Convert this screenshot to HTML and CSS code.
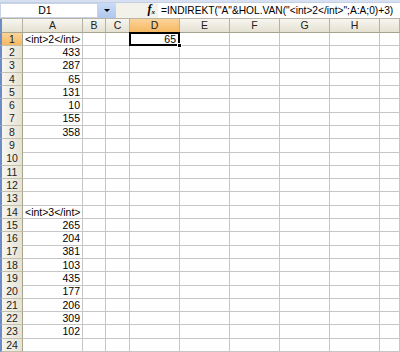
FILE: index.html
```html
<!DOCTYPE html>
<html>
<head>
<meta charset="utf-8">
<link rel="stylesheet" href="styles.css">
</head>
<body>
<div class="app">
  <div class="topstrip"></div>
  <div class="fbar">
    <div class="namebox">D1</div>
    <div class="dd"><span class="tri"></span></div>
    <div class="fxarea"><span class="fx">f<sub>x</sub></span></div>
    <div class="formula">=INDIREKT("A"&amp;HOL.VAN("&lt;int&gt;2&lt;/int&gt;";A:A;0)+3)</div>
  </div>
  <div class="sheet">
    <div class="row hdr"><span class="corner"></span><span>A</span><span>B</span><span>C</span><span class="sel">D</span><span>E</span><span>F</span><span>G</span><span>H</span><span></span></div>
    <div class="row"><span class="rh sel">1</span><span class="l">&lt;int&gt;2&lt;/int&gt;</span><span></span><span></span><span class="active">65<b class="handle"></b></span><span></span><span></span><span></span><span></span><span></span></div>
    <div class="row"><span class="rh">2</span><span>433</span><span></span><span></span><span></span><span></span><span></span><span></span><span></span><span></span></div>
    <div class="row"><span class="rh">3</span><span>287</span><span></span><span></span><span></span><span></span><span></span><span></span><span></span><span></span></div>
    <div class="row"><span class="rh">4</span><span>65</span><span></span><span></span><span></span><span></span><span></span><span></span><span></span><span></span></div>
    <div class="row"><span class="rh">5</span><span>131</span><span></span><span></span><span></span><span></span><span></span><span></span><span></span><span></span></div>
    <div class="row"><span class="rh">6</span><span>10</span><span></span><span></span><span></span><span></span><span></span><span></span><span></span><span></span></div>
    <div class="row"><span class="rh">7</span><span>155</span><span></span><span></span><span></span><span></span><span></span><span></span><span></span><span></span></div>
    <div class="row"><span class="rh">8</span><span>358</span><span></span><span></span><span></span><span></span><span></span><span></span><span></span><span></span></div>
    <div class="row"><span class="rh">9</span><span></span><span></span><span></span><span></span><span></span><span></span><span></span><span></span><span></span></div>
    <div class="row"><span class="rh">10</span><span></span><span></span><span></span><span></span><span></span><span></span><span></span><span></span><span></span></div>
    <div class="row"><span class="rh">11</span><span></span><span></span><span></span><span></span><span></span><span></span><span></span><span></span><span></span></div>
    <div class="row"><span class="rh">12</span><span></span><span></span><span></span><span></span><span></span><span></span><span></span><span></span><span></span></div>
    <div class="row"><span class="rh">13</span><span></span><span></span><span></span><span></span><span></span><span></span><span></span><span></span><span></span></div>
    <div class="row"><span class="rh">14</span><span class="l">&lt;int&gt;3&lt;/int&gt;</span><span></span><span></span><span></span><span></span><span></span><span></span><span></span><span></span></div>
    <div class="row"><span class="rh">15</span><span>265</span><span></span><span></span><span></span><span></span><span></span><span></span><span></span><span></span></div>
    <div class="row"><span class="rh">16</span><span>204</span><span></span><span></span><span></span><span></span><span></span><span></span><span></span><span></span></div>
    <div class="row"><span class="rh">17</span><span>381</span><span></span><span></span><span></span><span></span><span></span><span></span><span></span><span></span></div>
    <div class="row"><span class="rh">18</span><span>103</span><span></span><span></span><span></span><span></span><span></span><span></span><span></span><span></span></div>
    <div class="row"><span class="rh">19</span><span>435</span><span></span><span></span><span></span><span></span><span></span><span></span><span></span><span></span></div>
    <div class="row"><span class="rh">20</span><span>177</span><span></span><span></span><span></span><span></span><span></span><span></span><span></span><span></span></div>
    <div class="row"><span class="rh">21</span><span>206</span><span></span><span></span><span></span><span></span><span></span><span></span><span></span><span></span></div>
    <div class="row"><span class="rh">22</span><span>309</span><span></span><span></span><span></span><span></span><span></span><span></span><span></span><span></span></div>
    <div class="row"><span class="rh">23</span><span>102</span><span></span><span></span><span></span><span></span><span></span><span></span><span></span><span></span></div>
    <div class="row"><span class="rh">24</span><span></span><span></span><span></span><span></span><span></span><span></span><span></span><span></span><span></span></div>
  </div>
</div>
</body>
</html>
```
FILE: styles.css
```css
* { box-sizing: border-box; }
html, body { margin: 0; padding: 0; background: #fff; }
.app {
  width: 400px;
  height: 352px;
  overflow: hidden;
  font-family: "Liberation Sans", Arial, sans-serif;
  font-size: 10.5px;
  color: #000;
}
.topstrip {
  height: 3px;
  background: #d6e0f0;
  border-bottom: 1px solid #c3cfe3;
}
.fbar {
  height: 16px;
  display: flex;
  background: #ece9d8;
  border-bottom: 1px solid #b8b5a6;
}
.namebox {
  width: 98px;
  background: #fff;
  border: 1px solid #c8d4e6;
  text-align: center;
  line-height: 13px;
  padding-right: 8px;
}
.dd {
  width: 18px;
  background: linear-gradient(#c9dbf6, #b0c8ee);
  display: flex;
  align-items: center;
  justify-content: center;
}
.tri {
  width: 0; height: 0;
  border-left: 3px solid transparent;
  border-right: 3px solid transparent;
  border-top: 3px solid #000;
}
.fxarea {
  width: 42px;
  background: #f2f1ea;
  display: flex;
  align-items: center;
  justify-content: flex-end;
  padding-right: 3px;
}
.fx {
  font-family: "Liberation Serif", serif;
  font-style: italic;
  font-weight: bold;
  font-size: 12px;
  line-height: 12px;
}
.fx sub { font-size: 7px; vertical-align: -1px; }
.formula {
  flex: 1;
  background: #fff;
  padding-left: 3px;
  line-height: 15px;
  font-size: 10.2px;
  white-space: nowrap;
  overflow: hidden;
}
.sheet { position: relative; }
.row {
  display: grid;
  grid-template-columns: 23px 60px 23px 24px 50px 50px 50px 50px 50px 1fr;
  height: 13.3px;
}
.row > span {
  border-right: 1px solid #c6c6c6;
  border-bottom: 1px solid #c6c6c6;
  text-align: right;
  padding-right: 2px;
  line-height: 12.5px;
  white-space: nowrap;
  overflow: visible;
  position: relative;
}
.row > span.l { text-align: left; padding-left: 2px; padding-right: 0; }
.row.hdr { height: 13.7px; }
.row.hdr > span {
  background: linear-gradient(#f7f6f0, #e4e1d2);
  border-right: 1px solid #b4b1a2;
  border-bottom: 1px solid #a6a38f;
  text-align: center;
  padding: 0;
  line-height: 12.5px;
  color: #222;
}
.row > span.rh {
  background: linear-gradient(90deg, #f6f5ef, #e6e3d4);
  border-right: 1px solid #a6a38f;
  border-bottom: 1px solid #c2bfae;
  border-left: 2px solid #6d8cc7;
  text-align: center;
  padding: 0;
  color: #222;
}
.row.hdr > span.corner {
  border-left: 2px solid #6d8cc7;
}
.row > span.sel, .row.hdr > span.sel {
  background: linear-gradient(#fbd49a, #f6b862);
}
.row > span.active { padding-right: 3px; }
.row > span.active::after {
  content: "";
  position: absolute;
  left: -1px; top: -1px; right: -1px; bottom: -1px;
  border: 2px solid #000;
}
.handle {
  position: absolute;
  right: -3px;
  bottom: -3px;
  width: 5px;
  height: 5px;
  background: #000;
  border: 1px solid #fff;
  z-index: 2;
}
```
